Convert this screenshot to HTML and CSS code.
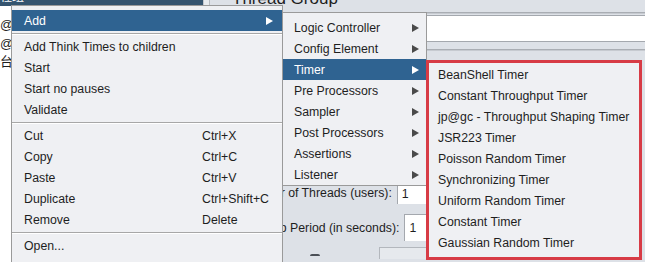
FILE: index.html
```html
<!DOCTYPE html>
<html lang="en">
<head>
    <meta charset="UTF-8">
    <title>Thread Group - context menu</title>
    <link rel="stylesheet" href="styles.css">
</head>
<body>
    <div class="app">
        <div class="tree">
            <div class="tree-row selected"><span class="tree-text">程组</span></div>
            <ul class="tree-items">
                <li>@</li>
                <li>@</li>
                <li>台</li>
            </ul>
        </div>
        <div class="splitter"></div>
        <div class="editor">
            <div class="editor-title">Thread Group</div>
            <div class="rule"></div>
            <div class="name-row">
                <div class="text-field wide"></div>
            </div>
            <div class="rule second"></div>
            <div class="props">
                <div class="prop-row">
                    <span class="prop-label">Number of Threads (users):</span>
                    <div class="text-field small">1</div>
                </div>
                <div class="prop-row">
                    <span class="prop-label">Ramp-Up Period (in seconds):</span>
                    <div class="text-field small">1</div>
                </div>
                <div class="loop-row">
                    <span class="check"></span>
                    <div class="loop-box"></div>
                </div>
            </div>
        </div>
    </div>

    <div class="menu main-menu">
        <div class="menu-item active">
            <span class="label">Add</span>
            <span class="arrow"></span>
        </div>
        <div class="menu-sep"></div>
        <div class="menu-item"><span class="label">Add Think Times to children</span></div>
        <div class="menu-item"><span class="label">Start</span></div>
        <div class="menu-item"><span class="label">Start no pauses</span></div>
        <div class="menu-item"><span class="label">Validate</span></div>
        <div class="menu-sep"></div>
        <div class="menu-item"><span class="label">Cut</span><span class="shortcut">Ctrl+X</span></div>
        <div class="menu-item"><span class="label">Copy</span><span class="shortcut">Ctrl+C</span></div>
        <div class="menu-item"><span class="label">Paste</span><span class="shortcut">Ctrl+V</span></div>
        <div class="menu-item"><span class="label">Duplicate</span><span class="shortcut">Ctrl+Shift+C</span></div>
        <div class="menu-item"><span class="label">Remove</span><span class="shortcut">Delete</span></div>
        <div class="menu-sep"></div>
        <div class="menu-item"><span class="label">Open...</span></div>
    </div>

    <div class="menu sub-menu">
        <div class="menu-item"><span class="label">Logic Controller</span><span class="arrow"></span></div>
        <div class="menu-item"><span class="label">Config Element</span><span class="arrow"></span></div>
        <div class="menu-item active"><span class="label">Timer</span><span class="arrow"></span></div>
        <div class="menu-item"><span class="label">Pre Processors</span><span class="arrow"></span></div>
        <div class="menu-item"><span class="label">Sampler</span><span class="arrow"></span></div>
        <div class="menu-item"><span class="label">Post Processors</span><span class="arrow"></span></div>
        <div class="menu-item"><span class="label">Assertions</span><span class="arrow"></span></div>
        <div class="menu-item"><span class="label">Listener</span><span class="arrow"></span></div>
    </div>

    <div class="menu timer-menu">
        <div class="menu-item"><span class="label">BeanShell Timer</span></div>
        <div class="menu-item"><span class="label">Constant Throughput Timer</span></div>
        <div class="menu-item"><span class="label">jp@gc - Throughput Shaping Timer</span></div>
        <div class="menu-item"><span class="label">JSR223 Timer</span></div>
        <div class="menu-item"><span class="label">Poisson Random Timer</span></div>
        <div class="menu-item"><span class="label">Synchronizing Timer</span></div>
        <div class="menu-item"><span class="label">Uniform Random Timer</span></div>
        <div class="menu-item"><span class="label">Constant Timer</span></div>
        <div class="menu-item"><span class="label">Gaussian Random Timer</span></div>
    </div>
</body>
</html>
```

FILE: styles.css
```css
:root {
    --panel: #dde1e7;
    --menu-bg: #eff0f3;
    --menu-border: #9a9a9a;
    --highlight: #2f6391;
    --text: #1e1e1e;
    --rule: #a9adb3;
    --marker: #d73b45;
}

* {
    margin: 0;
    padding: 0;
    box-sizing: border-box;
}

body {
    font-family: "Liberation Sans", Arial, "Noto Sans CJK SC", sans-serif;
    font-size: 12.3px;
    color: var(--text);
    width: 645px;
    height: 262px;
    overflow: hidden;
    position: relative;
    background: var(--panel);
}

.app {
    display: flex;
    height: 262px;
}

/* tree on the left */
.tree {
    width: 203px;
    background: #ffffff;
    flex-shrink: 0;
}

.tree-row.selected {
    height: 18px;
    margin-top: -12px;
    background: #34546f;
    color: #ffffff;
    line-height: 18px;
    font-size: 12px;
    white-space: nowrap;
    overflow: hidden;
}

.tree-items {
    list-style: none;
    margin-top: 10px;
    font-size: 13px;
    white-space: nowrap;
    overflow: hidden;
}

.tree-items li {
    height: 18.5px;
    line-height: 18.5px;
}

.splitter {
    width: 7px;
    flex-shrink: 0;
    background: #e8ebef;
    border-left: 1px solid #c3c7cd;
    border-right: 1px solid #b7bbc1;
}

/* editor on the right */
.editor {
    flex: 1;
    display: flex;
    flex-direction: column;
}

.editor-title {
    font-size: 17px;
    line-height: 20px;
    margin-top: -11px;
    padding-left: 22px;
    white-space: nowrap;
}

.rule {
    height: 4px;
    margin-top: 3px;
    border-top: 1px solid var(--rule);
    border-bottom: 1px solid #c6cad0;
}

.rule.second {
    margin-top: 7px;
}

.name-row {
    display: flex;
    align-items: center;
    padding-left: 76px;
    margin-top: 1px;
}

.text-field {
    background: #ffffff;
    border-top: 1px solid #a4a8ae;
    border-left: 1px solid #a4a8ae;
    padding: 0 4px;
    line-height: 20px;
}

.text-field.wide {
    flex: 1;
    height: 27px;
    border-bottom: 1px solid #a4a8ae;
}

.props {
    display: flex;
    flex-direction: column;
    padding-top: 131px;
}

.prop-row {
    display: flex;
    align-items: center;
    gap: 5px;
    padding-left: 31px;
    height: 22px;
}

.prop-row + .prop-row {
    margin-top: 10px;
    height: 27px;
    padding-left: 24px;
}

.text-field.small {
    width: 60px;
    height: 21px;
}

.prop-row + .prop-row .text-field.small {
    height: 27px;
    line-height: 26px;
}

.loop-row {
    display: flex;
    align-items: flex-start;
    gap: 59px;
    padding-left: 100px;
    margin-top: 6px;
}

.check {
    width: 10px;
    height: 10px;
    margin-top: 7px;
    border-top: 2px solid #4a4f56;
    border-radius: 2px;
}

.loop-box {
    width: 60px;
    height: 12px;
    border-top: 1px solid #b3b7bd;
    border-left: 1px solid #b3b7bd;
    background: #e6e9ed;
}

/* popup menus */
.menu {
    position: absolute;
    background: var(--menu-bg);
    border: 1px solid var(--menu-border);
}

.menu-item {
    display: flex;
    align-items: center;
    height: 21px;
    line-height: 19px;
    padding-top: 2px;
    white-space: nowrap;
}

.menu-item .label {
    flex: 1;
}

.menu-item.active {
    background: var(--highlight);
    color: #ffffff;
}

.menu-sep {
    height: 1px;
    margin: 2px 0;
    background: #a7a7a7;
    box-shadow: 0 1px 0 #ffffff;
}

.arrow {
    width: 0;
    height: 0;
    margin-top: -2px;
    border-left: 7px solid #4a4a4a;
    border-top: 4.5px solid transparent;
    border-bottom: 4.5px solid transparent;
}

.menu-item.active .arrow {
    border-left-color: #ffffff;
}

.main-menu {
    left: 11px;
    top: 5px;
    width: 272px;
    height: 270px;
    padding-top: 4px;
}

.main-menu .menu-item {
    padding-left: 12px;
    padding-right: 9px;
}

.main-menu .label {
    flex: 0 0 178px;
}

.main-menu .active .label {
    flex: 1;
}

.sub-menu {
    left: 282px;
    top: 12px;
    width: 145px;
    padding-top: 4px;
}

.sub-menu .menu-item {
    padding-left: 11px;
    padding-right: 7px;
}

.timer-menu {
    left: 426px;
    top: 60px;
    width: 216px;
    height: 200px;
    padding-top: 1px;
    border: 3px solid var(--marker);
}

.timer-menu .menu-item {
    padding-left: 9px;
}
```
